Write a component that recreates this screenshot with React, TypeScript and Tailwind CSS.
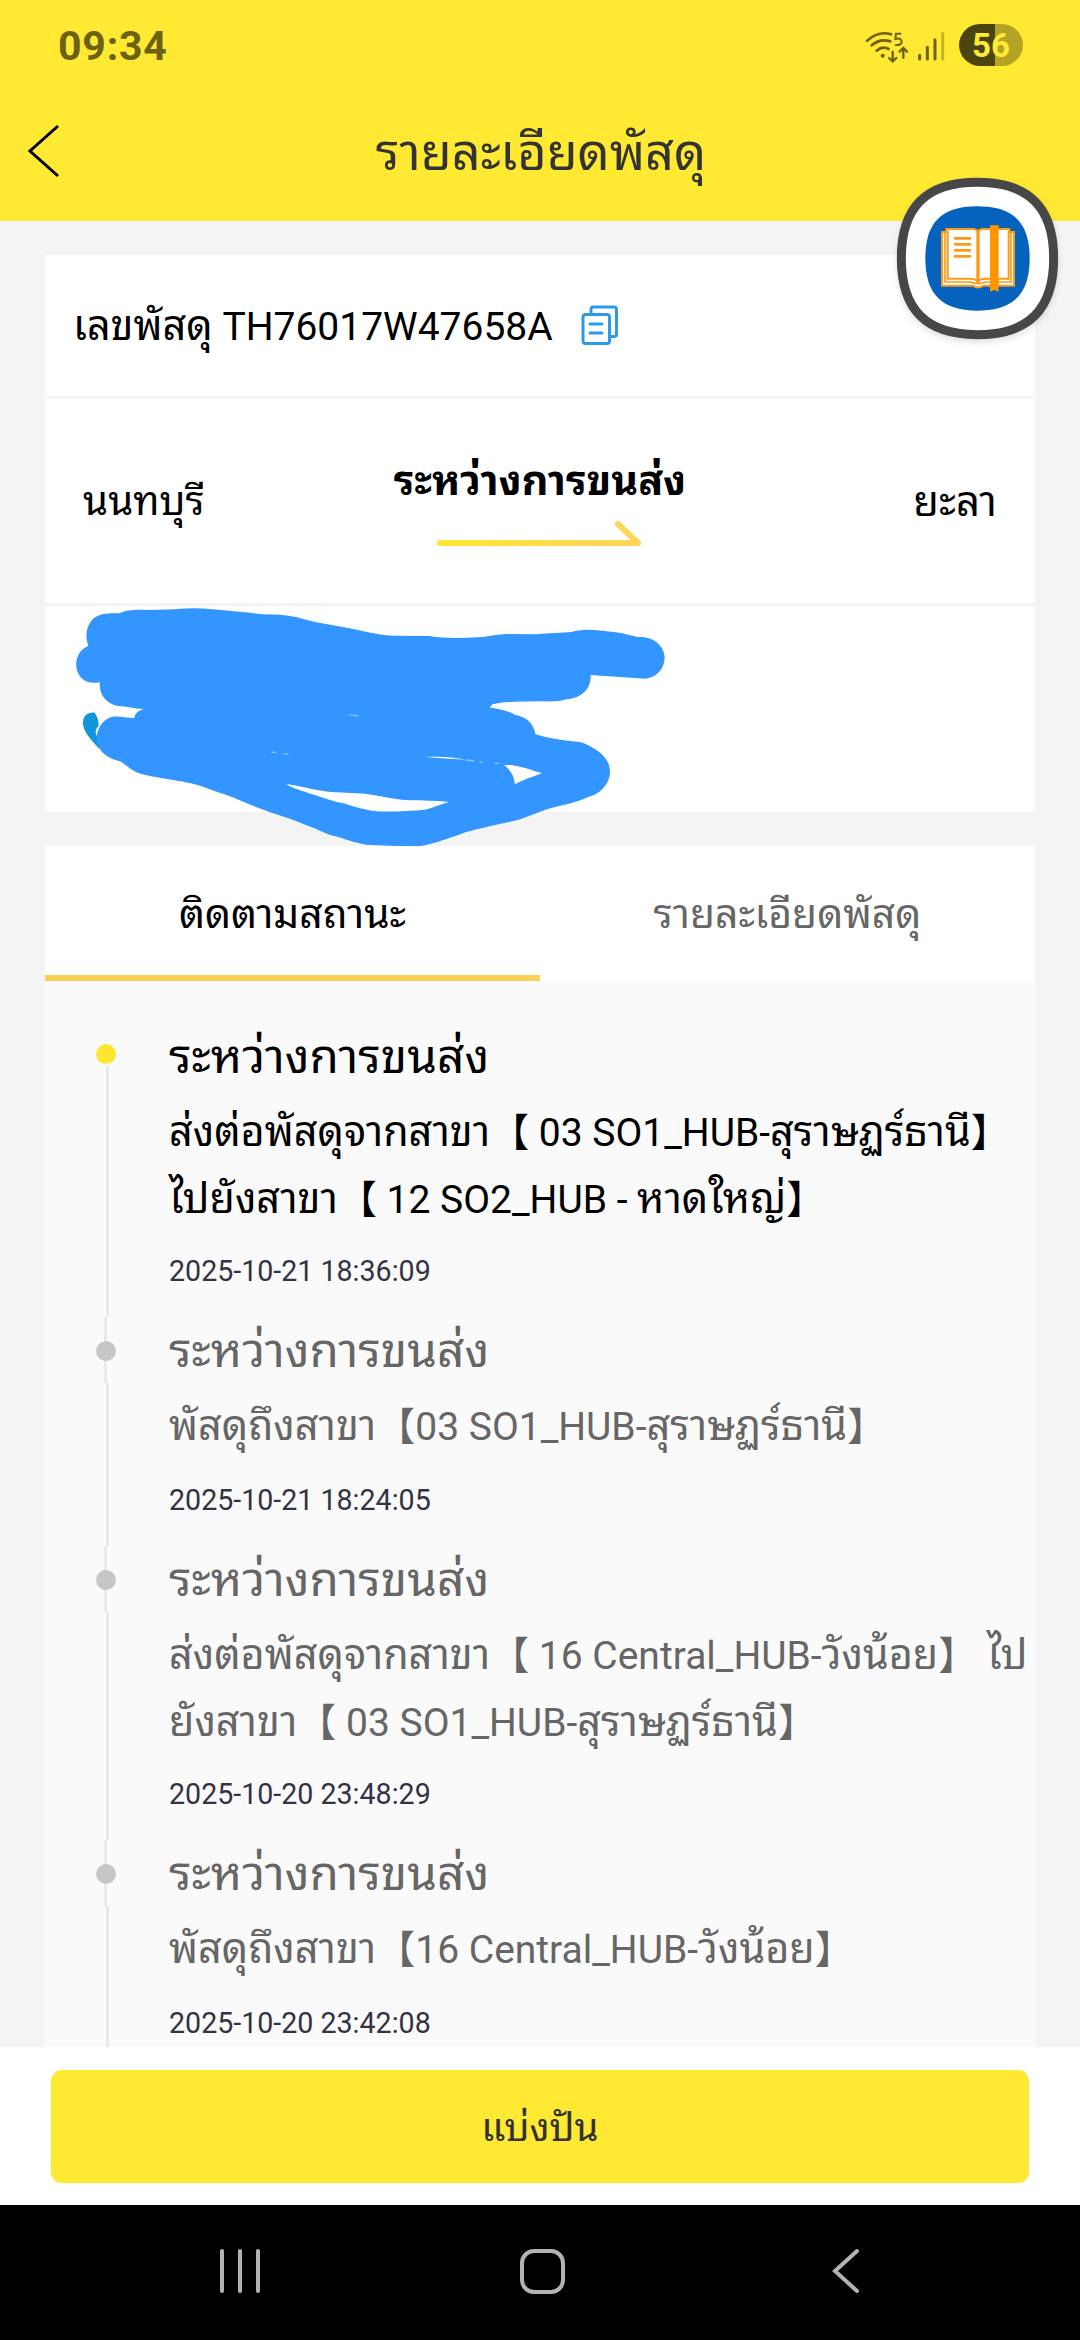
import React from 'react';

interface TrackEvent {
  title: string;
  lines: string[];
  time: string;
}

const events: TrackEvent[] = [
  {
    title: 'ระหว่างการขนส่ง',
    lines: ['ส่งต่อพัสดุจากสาขา【 03 SO1_HUB-สุราษฏร์ธานี】', 'ไปยังสาขา【 12 SO2_HUB - หาดใหญ่】'],
    time: '2025-10-21 18:36:09',
  },
  {
    title: 'ระหว่างการขนส่ง',
    lines: ['พัสดุถึงสาขา【03 SO1_HUB-สุราษฏร์ธานี】'],
    time: '2025-10-21 18:24:05',
  },
  {
    title: 'ระหว่างการขนส่ง',
    lines: ['ส่งต่อพัสดุจากสาขา【 16 Central_HUB-วังน้อย】 ไป', 'ยังสาขา【 03 SO1_HUB-สุราษฏร์ธานี】'],
    time: '2025-10-20 23:48:29',
  },
  {
    title: 'ระหว่างการขนส่ง',
    lines: ['พัสดุถึงสาขา【16 Central_HUB-วังน้อย】'],
    time: '2025-10-20 23:42:08',
  },
];

// Thai runs are set slightly larger than the Latin around them
const Thai = ({ text }: { text: string }) => (
  <>
    {text.split(/([\u0E00-\u0E7F]+)/).map((part, i) =>
      i % 2 === 1 ? (
        <span key={i} className="text-[1.06em]">{part}</span>
      ) : (
        part
      )
    )}
  </>
);

const StatusBar = () => (
  <div className="flex h-[90px] items-center justify-between pr-[57px] pl-[58px]">
    <span className="pt-[2px] text-[41px] leading-[88px] font-bold tracking-[0.8px] text-[#6b6216]">09:34</span>
    <div className="flex items-center">
      <svg width="90" height="40" viewBox="0 0 270 120" fill="none" stroke="#6b6216" strokeWidth="8" strokeLinecap="round">
        <path d="M9 47Q44 16 81 28" />
        <path d="M23 61Q48 39 79 49" />
        <path d="M38 77Q55 62 74 72" />
        <circle cx="56" cy="92" r="6" fill="#6b6216" stroke="none" />
        <path d="M112 26H96L94 42Q113 37 113 50Q113 62 93 60" strokeWidth="6" strokeLinecap="butt" />
        <path d="M86 80V108M75 99L86 109L97 99M118 98V70M107 80L118 69L129 80" strokeWidth="7" />
        <path d="M167 91V102M190 67V102M213 44V102" strokeWidth="9" />
        <path d="M236 25V102" strokeWidth="9" stroke="#c5b524" />
      </svg>
      <div className="ml-[5px] flex h-[42px] w-[64px] items-center justify-center rounded-[21px] bg-linear-to-r from-[#4c4510] from-56% to-[#b3a423] to-56% text-[33px] leading-none font-bold text-[#ffeb35]">
        56
      </div>
    </div>
  </div>
);

const FloatingBook = () => (
  <div className="absolute top-[160px] left-[870px]">
    <svg className="drop-shadow-md" width="210" height="200" viewBox="0 0 630 600" fill="none">
      <path
        d="M322 67C475 67 551 141 551 295C551 449 475 524 322 524C169 524 94 449 94 295C94 141 169 67 322 67Z"
        fill="#fff" stroke="#474748" strokeWidth="27"
      />
      <path d="M322 139C432 139 479 190 479 295C479 400 432 452 322 452C212 452 166 400 166 295C166 190 212 139 322 139Z" fill="#0562bd" />
      <path d="M216 216H229V207H312L324 212L336 207H418V216H432V377H340Q324 388 308 377H216Z" fill="#fff" stroke="#fb9a17" strokeWidth="6" />
      <path d="M225 216V366H302Q324 376 346 366H423V216" stroke="#fb9a17" strokeWidth="5" />
      <path d="M233 213V356H300Q316 356 324 364Q332 356 348 356H416V213" stroke="#fb9a17" strokeWidth="6" />
      <path d="M324 212V372" stroke="#fb9a17" strokeWidth="10" />
      <path d="M255 235H300M255 253H300M255 271H300M255 289H300" stroke="#fb9a17" strokeWidth="8" strokeLinecap="round" />
      <path d="M360 196H386V395L373 390L360 395Z" fill="#ff9500" />
    </svg>
  </div>
);

// Hand-drawn marker strokes over the address
const Scribble = () => (
  <svg className="absolute top-[-16px] left-[-5px]" width="660" height="280" viewBox="0 0 1568 840" preserveAspectRatio="none">
    <path d="M130 368C112 366 101 380 102 402C104 426 120 448 142 478L136 440C130 426 132 418 139 408C140 390 136 380 130 368Z" fill="#1296db" />
    <path
      fill="#3395ff"
      fillRule="evenodd"
      d="M126 86C146 68 166 70 188 70C206 60 222 58 260 60L320 58C350 54 380 54 410 58L500 68C530 76 560 72 590 77C620 82 640 94 670 100L745 117C780 127 810 136 840 137L925 138C960 146 1000 144 1040 142C1070 139 1090 132 1115 132L1180 133C1210 127 1240 130 1265 125C1295 116 1320 120 1345 124C1380 127 1400 136 1420 141C1460 138 1484 170 1484 204C1483 238 1465 262 1438 266L1308 255C1310 294 1290 324 1250 328C1235 336 1210 334 1180 334C1140 336 1100 334 1075 343L1068 353C1090 355 1115 364 1128 374C1160 382 1174 404 1177 433C1200 442 1230 450 1285 457C1300 462 1310 472 1322 480C1345 500 1355 522 1354 548C1353 580 1335 602 1318 614C1300 620 1288 630 1270 636C1240 648 1215 652 1195 662C1170 672 1150 686 1125 693L1070 708C1040 718 1020 722 1000 732C970 745 940 760 905 768C860 769 820 767 775 764C745 758 725 746 692 736C670 725 645 710 600 689C570 676 535 664 480 634C455 618 425 608 400 596C370 582 345 576 320 571C290 564 265 561 235 550C215 540 205 524 190 514C165 506 146 492 137 464C130 430 142 390 172 380C190 378 205 384 224 384C226 370 234 362 246 357C225 356 205 349 185 348C155 340 140 312 142 277C105 286 86 256 86 224C86 200 96 176 115 168C105 134 112 106 126 86ZM585 582C600 596 625 603 645 612C670 622 695 634 725 641C750 652 770 658 800 664C840 666 880 662 915 659C935 653 950 644 972 636C940 631 910 634 880 631C840 628 810 617 770 611C730 607 700 608 670 602C640 597 615 587 585 582ZM1102 524C1118 540 1127 558 1128 583C1145 572 1165 562 1193 550C1165 541 1140 525 1102 524ZM913 501C945 504 980 507 1010 509C985 502 950 498 913 501Z"
    />
    <path d="M734 374L745 376L757 378M550 486L562 488M578 490L590 493M1012 510L1032 513M1044 516L1052 517M1080 519L1090 521" stroke="#8cc4ff" strokeWidth="4" fill="none" />
  </svg>
);

const Rail = ({ first }: { first: boolean }) => (
  <div className="relative w-[20px] shrink-0">
    {first ? (
      <div className="ml-[10px] h-full pt-[43px]">
        <div className="h-full w-[3px] bg-[#e9e9e9]" />
      </div>
    ) : (
      <div className="flex h-full flex-col">
        <div className="ml-[8px] h-[66px] w-[3px] bg-[#e9e9e9]" />
        <div className="ml-[10px] w-[3px] flex-1 bg-[#e9e9e9]" />
      </div>
    )}
    <div className={`absolute left-0 h-[20px] w-[20px] rounded-full ${first ? 'top-[21px] bg-[#ffe62e]' : 'top-[24px] bg-[#c6c6c6]'}`} />
  </div>
);

const App: React.FC = () => {
  return (
    <div className="relative flex h-[2340px] w-[1080px] flex-col overflow-hidden bg-[#f4f4f4] font-['Roboto','Noto_Sans_Thai_Looped','Droid_Sans_Thai','Loma','Noto_Sans_CJK_SC',sans-serif] text-black">
      <header className="h-[221px] shrink-0 bg-[#ffe933]">
        <StatusBar />
        <div className="flex h-[122px] items-center">
          <svg className="ml-[27px]" width="32" height="54" viewBox="0 0 32 54" fill="none" stroke="#000" strokeWidth="3">
            <path d="M31 2L3 27L31 52" />
          </svg>
          <h1 className="flex-1 pt-[5px] pr-[57px] text-center text-[47.5px] leading-[60px] text-[#333]">
            <Thai text="รายละเอียดพัสดุ" />
          </h1>
        </div>
      </header>

      <main className="flex min-h-0 flex-1 flex-col overflow-hidden px-[45px] pt-[34px]">
        <section className="flex shrink-0 flex-col gap-[3px]">
          <div className="flex h-[141px] items-center bg-white pt-[2px] pl-[28px] text-[39px]">
            <span><Thai text="เลขพัสดุ TH76017W47658A" /></span>
            <svg className="mb-[3px] ml-[28px]" width="37" height="40" viewBox="0 0 37 40" fill="none" stroke="#2b9be8" strokeWidth="3" strokeLinejoin="round" strokeLinecap="round">
              <path d="M10 9V4.500Q10 2 12.500 2H33Q35.500 2 35.500 4.500V29Q35.500 31.500 33 31.500H29" />
              <rect x="2" y="9.500" width="26.500" height="29" rx="2.500" />
              <path d="M9 19H21M9 28H21" />
            </svg>
          </div>
          <div className="flex h-[204px] items-center justify-between bg-white px-[38px] text-[39px]">
            <span className="w-[180px] pt-[3px] text-[38px]"><Thai text="นนทบุรี" /></span>
            <div className="flex flex-col items-center">
              <span className="leading-[56px] font-bold"><Thai text="ระหว่างการขนส่ง" /></span>
              <svg className="mt-[9px]" width="208" height="30" viewBox="0 0 208 30" fill="none">
                <defs>
                  <linearGradient id="arrow" gradientUnits="userSpaceOnUse" x1="0" y1="0" x2="208" y2="0">
                    <stop offset="0" stopColor="#ffe633" />
                    <stop offset="1" stopColor="#ffd45c" />
                  </linearGradient>
                </defs>
                <path d="M4 24H202L182 5" stroke="url(#arrow)" strokeWidth="6" strokeLinecap="round" strokeLinejoin="round" />
              </svg>
            </div>
            <span className="w-[180px] pt-[3px] text-right text-[39.5px]"><Thai text="ยะลา" /></span>
          </div>
          <div className="relative h-[206px] bg-white">
            <Scribble />
          </div>
        </section>

        <section className="mt-[34px] flex min-h-0 flex-1 flex-col">
          <div className="grid h-[135px] shrink-0 grid-cols-2 bg-white text-center text-[38.5px]">
            <button className="h-[135px] border-b-[6px] border-[#fad155] pt-[8px]"><Thai text="ติดตามสถานะ" /></button>
            <button className="h-[135px] pt-[2px] text-[#666]"><Thai text="รายละเอียดพัสดุ" /></button>
          </div>
          <div className="min-h-0 flex-1 overflow-hidden bg-[#fafafa] pt-[42px] pl-[51px]">
            {events.map((ev, i) => (
              <div key={ev.time} className={`flex ${ev.lines.length > 1 ? 'h-[294px]' : 'h-[229px]'}`}>
                <Rail first={i === 0} />
                <div className={`ml-[53px] whitespace-nowrap ${i === 0 ? 'text-black' : 'text-[#666]'}`}>
                  <p className="h-[68px] text-[45px] leading-[68px]"><Thai text={ev.title} /></p>
                  <div className="mt-[8px] text-[39px] leading-[67px]">
                    {ev.lines.map((line) => (
                      <p key={line} className="h-[67px]"><Thai text={line} /></p>
                    ))}
                  </div>
                  <p className={`text-[28.6px] leading-[66px] text-[#333344] ${ev.lines.length > 1 ? 'mt-[5px]' : 'mt-[7px]'}`}>{ev.time}</p>
                </div>
              </div>
            ))}
          </div>
        </section>
      </main>

      <footer className="shrink-0">
        <div className="h-[158px] bg-white px-[51px] pt-[23px]">
          <button className="h-[113px] w-full rounded-[11px] bg-[#ffe933] pt-[3px] text-[36.5px] text-[#333]">
            <Thai text="แบ่งปัน" />
          </button>
        </div>
        <nav className="h-[135px] bg-black">
          <svg width="1080" height="135" viewBox="0 0 1080 135" fill="none" stroke="#b3b3b3" strokeWidth="4" strokeLinecap="round">
            <path d="M222 46V86M240 46V86M258 46V86" />
            <rect x="522" y="46" width="41" height="41" rx="12" />
            <path d="M857 46L835 66L857 86" />
          </svg>
        </nav>
      </footer>

      <FloatingBook />
    </div>
  );
};

export default App;
